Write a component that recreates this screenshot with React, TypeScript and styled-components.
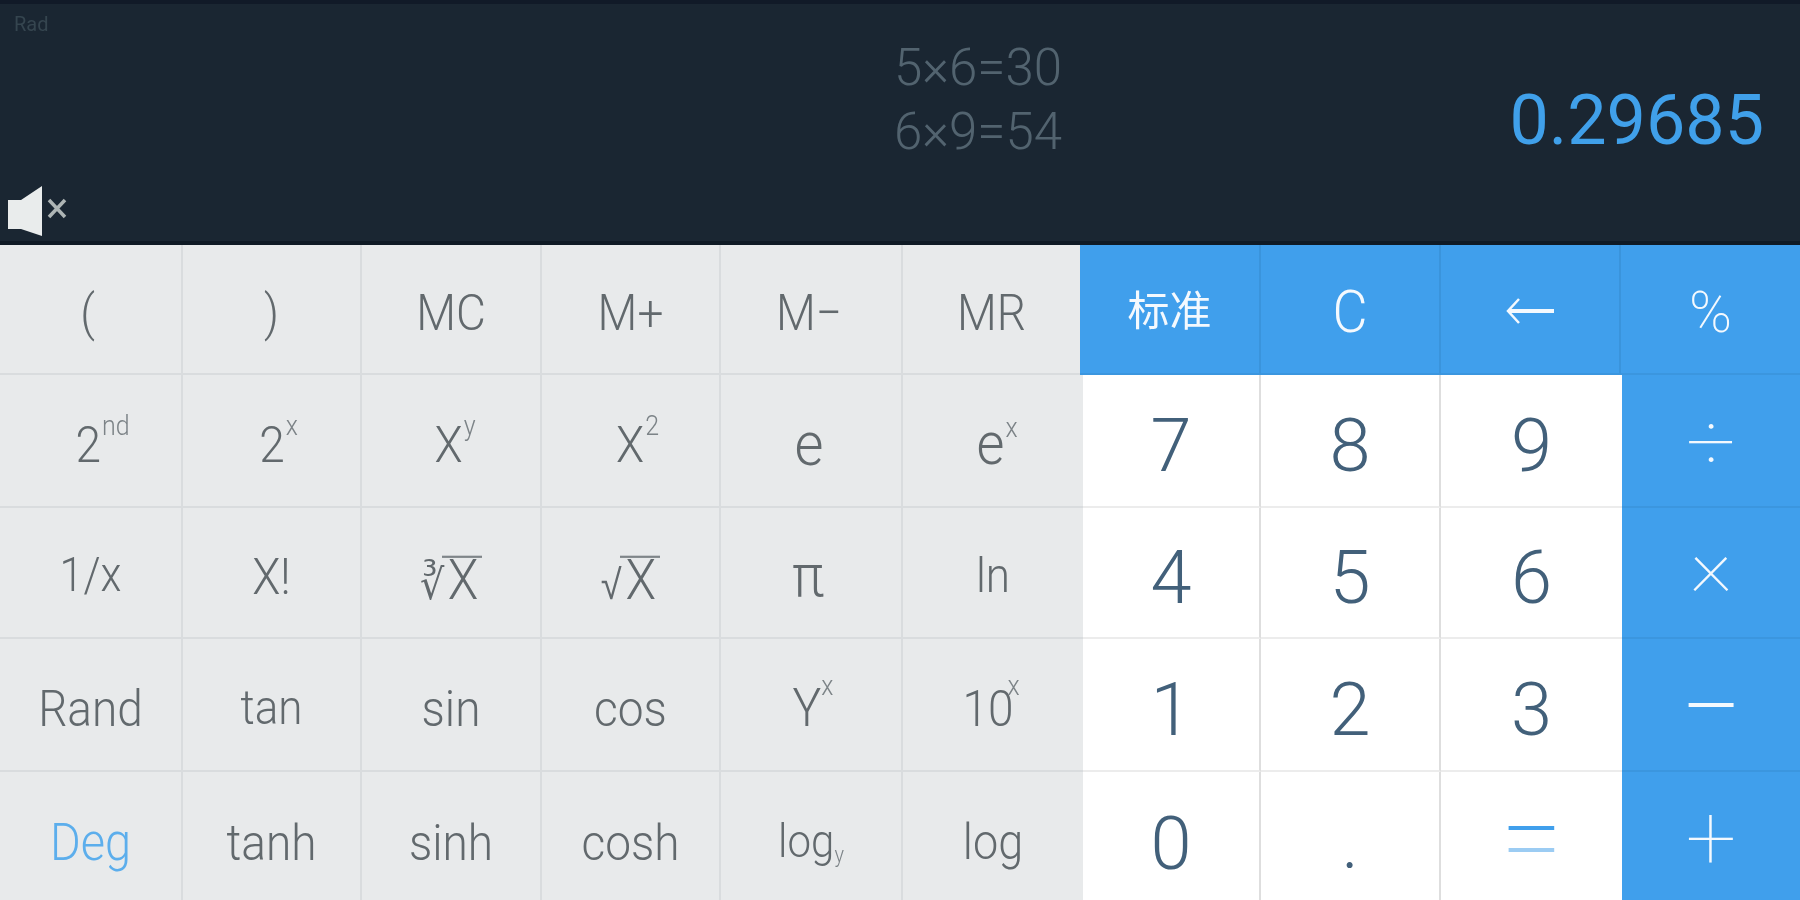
import React from 'react';
import styled, { createGlobalStyle } from 'styled-components';

type Tone = 'gray' | 'white' | 'blue';

interface IKey {
    label: React.ReactNode;
    tone: Tone;
    size?: number;
    weight?: number;
    accent?: boolean;
    dx?: number;
    dy?: number;
}

const GlobalStyle = createGlobalStyle`
    html, body {
        margin: 0;
        padding: 0;
        width: 1800px;
        height: 900px;
        overflow: hidden;
        background: #e8eaeb;
        font-family: Roboto, "Noto Sans CJK SC", sans-serif;
    }
`;

const Screen = styled.div`
    width: 1800px;
    height: 900px;
    display: flex;
    flex-direction: column;
`;

const Display = styled.div`
    height: 245px;
    box-sizing: border-box;
    display: flex;
    background: #1a2632;
    border-top: 4px solid #111a28;
    border-bottom: 4px solid #0f1a25;
`;

const StatusColumn = styled.div`
    flex: 0 0 894px;
    box-sizing: border-box;
    display: flex;
    flex-direction: column;
    justify-content: space-between;
    padding: 8px 0 5px 14px;
`;

const AngleMode = styled.div`
    font-size: 20px;
    line-height: 24px;
    color: #35454f;
    filter: blur(0.6px);
`;

const MuteIcon = styled.svg`
    display: block;
    margin-left: -6px;
    width: 60px;
    height: 50px;
`;

const History = styled.div`
    padding-top: 32px;
    font-size: 51px;
    font-weight: 350;
    line-height: 64px;
    color: #52636f;
    filter: blur(0.6px);
`;

const Result = styled.div`
    margin-left: auto;
    padding: 74px 36px 0 0;
    font-size: 70px;
    font-weight: 380;
    line-height: 84px;
    color: #40a0ea;
    filter: blur(0.5px);
`;

const Keypad = styled.div`
    flex: 1;
    display: grid;
    grid-template-rows: 130px 133px 131px 133px 128px;
`;

const KeyRow = styled.div<{ $top: boolean }>`
    display: grid;
    grid-template-columns: ${(p) =>
        p.$top
            ? '183px 179px 180px 179px 182px 177px 181px 180px 180px 179px'
            : '183px 179px 180px 179px 182px 180px 178px 180px 181px 178px'};
`;

const KeyCell = styled.div<{ $tone: Tone; $accent: boolean; $size: number; $weight: number }>`
    display: flex;
    align-items: center;
    justify-content: center;
    box-sizing: border-box;
    padding-top: ${(p) => (p.$tone === 'white' ? 10 : 6)}px;
    font-size: ${(p) => p.$size}px;
    font-weight: ${(p) => p.$weight};
    background: ${(p) => (p.$tone === 'gray' ? '#e8eaeb' : p.$tone === 'white' ? '#ffffff' : '#409fec')};
    color: ${(p) => {
        if (p.$accent) return '#5caeec';
        if (p.$tone === 'gray') return '#62696d';
        if (p.$tone === 'white') return '#42607a';
        return '#f4f9fe';
    }};
    border-right: 2px solid ${(p) => (p.$tone === 'gray' ? '#d9dcde' : p.$tone === 'white' ? '#dedede' : '#3a94dc')};
    border-bottom: 2px solid ${(p) => (p.$tone === 'gray' ? '#d9dcde' : p.$tone === 'white' ? '#ececec' : '#3b96df')};

    &:nth-child(6),
    &:last-child {
        border-right: 0;
    }

    ${KeyRow}:not(:first-child) > &:nth-child(9) {
        border-right: 0;
    }

    ${KeyRow}:last-child > & {
        border-bottom: 0;
        padding-top: ${(p) => (p.$tone === 'white' ? 15 : p.$tone === 'gray' ? 11 : 6)}px;
    }
`;

const Label = styled.span<{ $tall: boolean; $dx: number; $dy: number }>`
    display: inline-block;
    line-height: 1;
    white-space: nowrap;
    filter: blur(0.5px);
    transform: translate(${(p) => p.$dx}px, ${(p) => p.$dy}px) ${(p) => (p.$tall ? 'scaleY(1.1)' : '')};
`;

const Power = styled.sup`
    font-size: 25px;
    font-weight: 300;
    line-height: 0;
    vertical-align: 24px;
    margin-left: 1px;
    color: #7c8387;
`;

const TightPower = styled(Power)<{ $gap: number }>`
    margin-left: ${(p) => p.$gap}px;
    vertical-align: 28px;
`;

const Under = styled.sub`
    font-size: 20px;
    line-height: 0;
    vertical-align: -4px;
    color: #7c8387;
`;

const Radical = styled.span`
    font-family: "DejaVu Sans", sans-serif;
    font-size: 38px;
    font-weight: 300;
`;

const Radicand = styled.span`
    display: inline-block;
    border-top: 2px solid #7f8589;
    font-size: 50px;
    line-height: 38px;
    padding: 1px 4px 0 6px;
    margin-left: -2px;
`;

const EqualsSign = styled.span`
    background: linear-gradient(180deg, #409fec 47%, #9cccf3 51%);
    background-clip: text;
    -webkit-background-clip: text;
    color: transparent;
`;

const ArrowIcon = styled.svg`
    display: block;
    width: 50px;
    height: 30px;
    margin-top: -2px;
`;

const gray = (label: React.ReactNode, size = 46, dx = 0, dy = 0, accent = false): IKey => ({
    label,
    tone: 'gray',
    size,
    weight: 340,
    accent,
    dx,
    dy,
});
const white = (label: React.ReactNode, size = 74): IKey => ({ label, tone: 'white', size, weight: 340 });
const blue = (label: React.ReactNode, size = 44, weight = 300, dy = 0): IKey => ({ label, tone: 'blue', size, weight, dy });

const rows: Array<Array<IKey>> = [
    [
        gray('(', 46, -3), gray(')', 46, 0), gray('MC'), gray('M+'), gray('M−', 46, -2), gray('MR'),
        blue('标准', 42, 400), blue('C', 54),
        blue(
            <ArrowIcon viewBox="0 0 50 30">
                <path d="M14 3 L3 15 L14 27" fill="none" stroke="#f4f9fe" strokeWidth="2.5" />
                <path d="M4 15 H49" stroke="#f4f9fe" strokeWidth="4" />
            </ArrowIcon>
        ),
        blue('%', 58, 200),
    ],
    [
        gray(<>2<Power>nd</Power></>, 46, 12), gray(<>2<Power>x</Power></>, 46, 7),
        gray(<>X<Power>y</Power></>, 46, 4), gray(<>X<Power>2</Power></>, 46, 7),
        gray('e', 56, -2), gray(<>e<Power>x</Power></>, 54, 4),
        white('7'), white('8'), white('9'), blue('÷', 88, 150, -2),
    ],
    [
        gray('1/x', 43), gray('X!'),
        gray(<><Radical>∛</Radical><Radicand>X</Radicand></>, 46, 0, 5),
        gray(<><Radical>√</Radical><Radicand>X</Radicand></>, 46, 0, 5),
        gray('π', 54, -3), gray('ln', 44),
        white('4'), white('5'), white('6'), blue('×', 84, 120, -13),
    ],
    [
        gray('Rand'), gray('tan', 44), gray('sin', 46), gray('cos', 46),
        gray(<>Y<TightPower $gap={0}>x</TightPower></>, 48, 2),
        gray(<>10<TightPower $gap={-6}>x</TightPower></>, 46, -2),
        white('1'), white('2'), white('3'), blue('−', 110, 200),
    ],
    [
        gray('Deg', 47, 0, 0, true), gray('tanh'), gray('sinh'), gray('cosh'),
        gray(<>log<Under>y</Under></>, 42), gray('log', 45),
        white('0'), white('.', 72),
        { label: <EqualsSign>=</EqualsSign>, tone: 'white', size: 112, weight: 200, dy: -7 },
        blue('+', 90, 120),
    ],
];

const App: React.FC = () => {
    return (
        <>
            <GlobalStyle />
            <Screen>
                <Display>
                    <StatusColumn>
                        <AngleMode>Rad</AngleMode>
                        <MuteIcon viewBox="0 0 60 50">
                            <path d="M0 14 H13 L34 0 V50 L13 43 H0 Z" fill="#e9ecec" />
                            <path d="M41 14 L57 31 M57 14 L41 31" stroke="#aeb5b5" strokeWidth="3.5" />
                        </MuteIcon>
                    </StatusColumn>
                    <History>
                        <div>5×6=30</div>
                        <div>6×9=54</div>
                    </History>
                    <Result>0.29685</Result>
                </Display>
                <Keypad>
                    {rows.map((row, r) => (
                        <KeyRow key={r} $top={r === 0}>
                            {row.map((key, i) => (
                                <KeyCell
                                    key={i}
                                    $tone={key.tone}
                                    $accent={!!key.accent}
                                    $size={key.size ?? 46}
                                    $weight={key.weight ?? 300}
                                >
                                    <Label
                                        $tall={key.tone === 'gray' || key.size === 54}
                                        $dx={key.dx ?? 0}
                                        $dy={key.dy ?? 0}
                                    >
                                        {key.label}
                                    </Label>
                                </KeyCell>
                            ))}
                        </KeyRow>
                    ))}
                </Keypad>
            </Screen>
        </>
    );
};

export default App;
